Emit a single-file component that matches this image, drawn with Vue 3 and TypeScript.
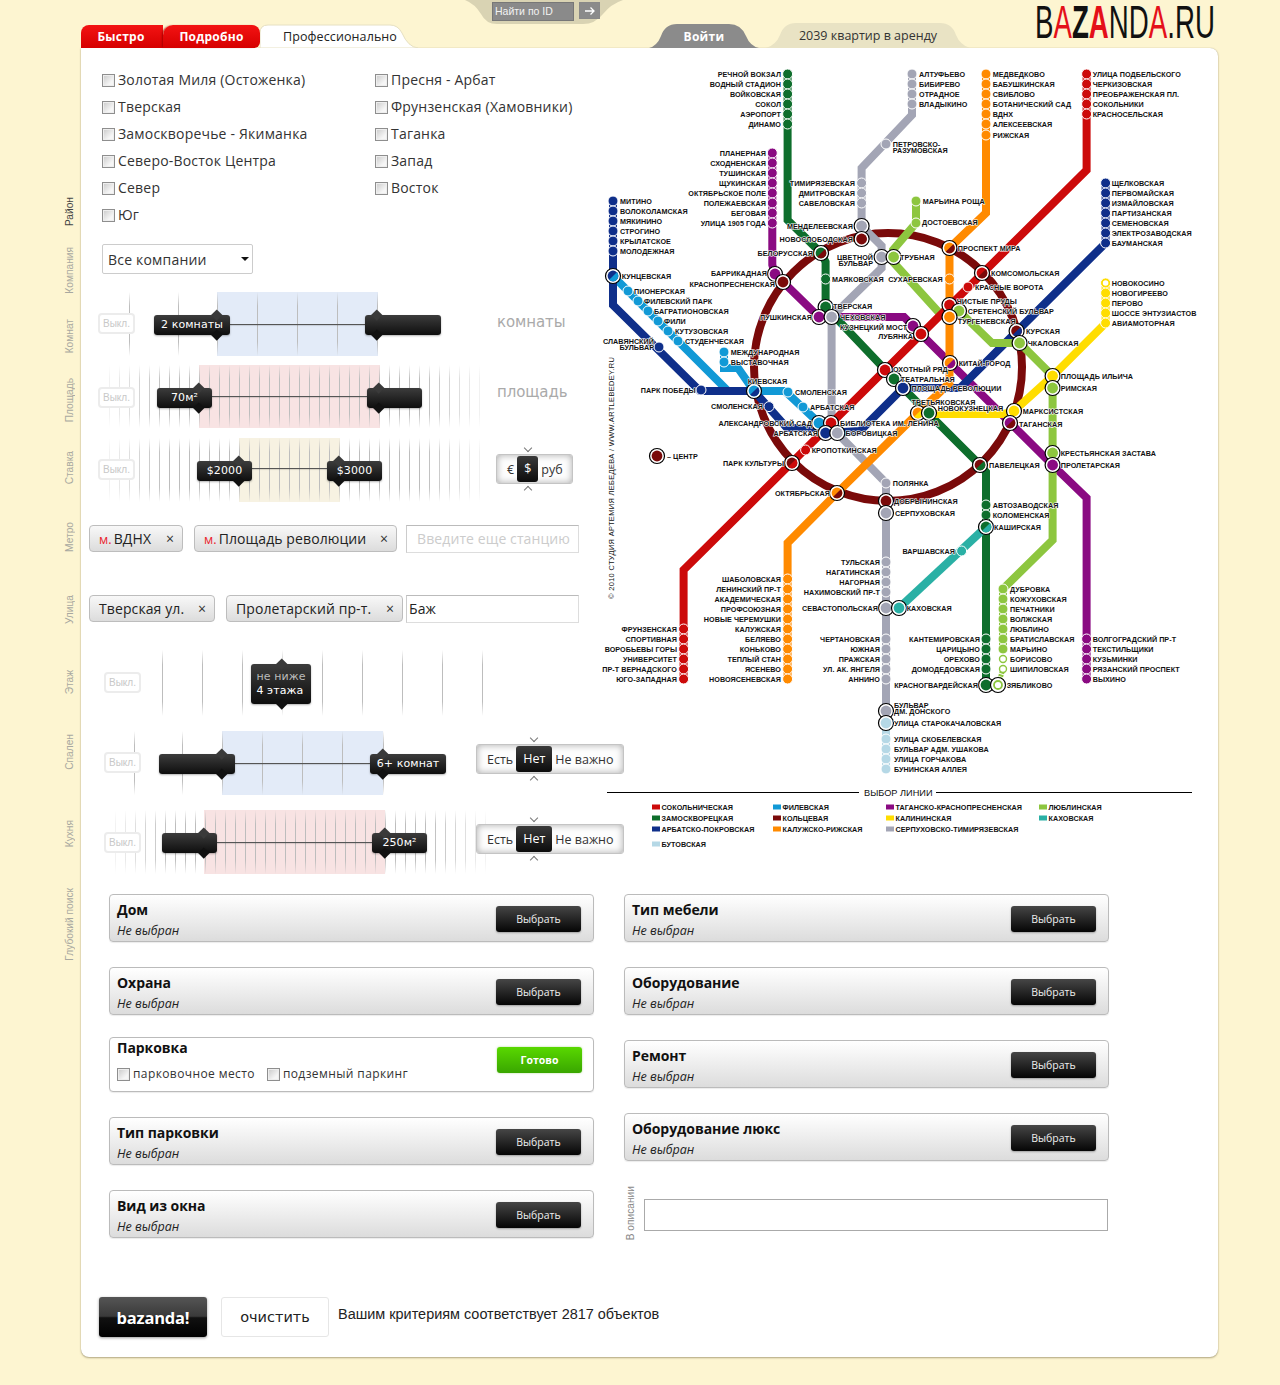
<script setup lang="ts">
interface Handle { x: number; w: number; d: number; text?: string; lines?: string[]; tall?: boolean }
interface Row {
  type: 'slider' | 'chips'
  mt: number
  h: number
  band?: { l: number; r: number; c: string }
  ticks?: { x: number; o: number }[]
  rail?: { l: number; r: number; y: number }
  off?: { x: number; y: number }
  handles?: Handle[]
  hy?: number
  label?: { t: string; ml: number; mt: number }
  seg?: { o: string[]; on: number; ml: number; mt: number }
  chips?: { m?: boolean; t: string; w: number; gap: number }[]
  input?: { ph?: string; v?: string }
}

const O = 89
const fine = (a: number, b: number) => {
  const out: { x: number; o: number }[] = []
  for (let x = a; x <= b; x += 10) {
    const e = Math.min(x - a, b - x)
    out.push({ x: x - O, o: Math.min(1, 0.2 + e / 70) })
  }
  return out
}
const some = (xs: number[], o = 1) => xs.map((x) => ({ x: x - O, o }))
const blue = '#e3ebf8'
const pink = '#f8e3e3'
const cream = '#f7f2e2'

const rows: Row[] = [
  { type: 'slider', mt: 18, h: 64, band: { l: 217, r: 378, c: blue }, ticks: some([129, 178, 217, 257, 297, 337, 377]), rail: { l: 230, r: 365, y: 32 }, off: { x: 98, y: 21 }, hy: 23,
    handles: [{ x: 154, w: 76, d: 217, text: '2 комнаты' }, { x: 365, w: 76, d: 377 }], label: { t: 'комнаты', ml: 21, mt: 20 } },
  { type: 'slider', mt: 9, h: 63, band: { l: 199, r: 380, c: pink }, ticks: fine(109, 480), rail: { l: 212, r: 367, y: 31 }, off: { x: 98, y: 22 }, hy: 23,
    handles: [{ x: 157, w: 55, d: 199, text: '70м²' }, { x: 367, w: 55, d: 379 }], label: { t: 'площадь', ml: 21, mt: 17 } },
  { type: 'slider', mt: 10, h: 64, band: { l: 239, r: 340, c: cream }, ticks: fine(109, 480), rail: { l: 252, r: 327, y: 30 }, off: { x: 98, y: 21 }, hy: 23,
    handles: [{ x: 197, w: 55, d: 239, text: '$2000' }, { x: 327, w: 55, d: 339, text: '$3000' }], seg: { o: ['€', '$', 'руб'], on: 1, ml: 20, mt: 16 } },
  { type: 'chips', mt: 23, h: 27, chips: [{ m: true, t: 'ВДНХ', w: 94, gap: 11 }, { m: true, t: 'Площадь революции', w: 203, gap: 9 }], input: { ph: 'Введите еще станцию' } },
  { type: 'chips', mt: 43, h: 27, chips: [{ t: 'Тверская ул.', w: 126, gap: 11 }, { t: 'Пролетарский пр-т.', w: 177, gap: 3 }], input: { v: 'Баж' } },
  { type: 'slider', mt: 28, h: 66, ticks: some([162, 202, 242, 282, 322, 362, 402, 442, 482]), off: { x: 104, y: 22 }, hy: 14,
    handles: [{ x: 251, w: 60, d: 282, lines: ['не ниже', '4 этажа'], tall: true }] },
  { type: 'slider', mt: 15, h: 64, band: { l: 222, r: 383, c: blue }, ticks: some([134, 182, 222, 262, 302, 342, 383]), rail: { l: 235, r: 370, y: 32 }, off: { x: 104, y: 21 }, hy: 23,
    handles: [{ x: 159, w: 76, d: 222 }, { x: 370, w: 76, d: 383, text: '6+ комнат' }], seg: { o: ['Есть', 'Нет', 'Не важно'], on: 1, ml: 0, mt: 13 } },
  { type: 'slider', mt: 15, h: 64, band: { l: 204, r: 385, c: pink }, ticks: fine(115, 485), rail: { l: 217, r: 372, y: 32 }, off: { x: 104, y: 22 }, hy: 23,
    handles: [{ x: 162, w: 55, d: 204 }, { x: 372, w: 55, d: 385, text: '250м²' }], seg: { o: ['Есть', 'Нет', 'Не важно'], on: 1, ml: 0, mt: 14 } },
]

const sideLabels = [
  { t: 'Район', h: 50, on: true }, { t: 'Компания', h: 72 }, { t: 'Комнат', h: 59 }, { t: 'Площадь', h: 73 },
  { t: 'Ставка', h: 71 }, { t: 'Метро', h: 73 }, { t: 'Улица', h: 75 }, { t: 'Этаж', h: 64 },
  { t: 'Спален', h: 86 }, { t: 'Кухня', h: 68 }, { t: 'Глубокий поиск', h: 80 },
]

const districts = [
  'Золотая Миля (Остоженка)', 'Пресня - Арбат', 'Тверская', 'Фрунзенская (Хамовники)',
  'Замоскворечье - Якиманка', 'Таганка', 'Северо-Восток Центра', 'Запад', 'Север', 'Восток', 'Юг',
]
const leftBlocks = ['Дом', 'Охрана', 'Парковка', 'Тип парковки', 'Вид из окна']
const rightBlocks = ['Тип мебели', 'Оборудование', 'Ремонт', 'Оборудование люкс']

/* metro map */
const C = { red: '#cc0a0a', grn: '#0e6e2c', blu: '#0f2f8a', lbl: '#1199d6', brn: '#7a0a0a', org: '#ff8a00', pur: '#8a0a82', yel: '#ffdd00', gry: '#a3a5b5', lim: '#8dc63f', tea: '#2ab0a5', but: '#b5d8e6' }
const lines: { c: string; p: string }[] = [
  { c: C.pur, p: '772.3,153 772.3,265 775,274 819,317 904,317 913,326 1052.6,465 1086.6,498 1086.6,679' },
  { c: C.gry, p: '912,74 912,115 861.6,168 861.6,226 881.6,246 881.6,268 831.6,317 831.6,425 837,433 886,483 886,711' },
  { c: C.but, p: '886,723 886,769' },
  { c: C.grn, p: '787.6,74 787.6,220 821,253 825.6,262 825.6,307 894,379 980,465 986,472 986,685' },
  { c: C.lbl, p: '613,276 728,391 785,391 819,423' },
  { c: C.lbl, p: '724,352 724,368 738,368 754,391' },
  { c: C.blu, p: '1105.6,183 1105.6,243 960,388 903,388 860,431 825.6,433' },
  { c: C.blu, p: '825.6,433 815,428 787,428 754,391 700,391 613,305 613,201' },
  { c: C.lim, p: '916,201 916,223 893,250 893,262 943,317' },
  { c: C.lim, p: '959,311 992,343 1019.6,343 1052.6,376 1052.6,540 1003,589 1003,649' },
  { c: C.yel, p: '1105.6,283 1105.6,323 1052.6,376 1014,411 1003,414 929,414' },
  { c: C.org, p: '986,74 986,213 949.5,248 949.5,383 918,413 837,493 787.6,543 787.6,679' },
  { c: C.red, p: '1086.6,74 1086.6,170 683.6,570 683.6,679' },
  { c: C.tea, p: '986,527 899,608' },
]
const col = (c: string, x: number, tx: number, a: string, items: [number, string][]) => ({ c, x, tx, a, items })
const seq = (s: number, n: string[]) => n.map((t, i) => [s + i * 10, t] as [number, string])
const cols = [
  col(C.grn, 787.6, 781, 'end', seq(74, ['РЕЧНОЙ ВОКЗАЛ', 'ВОДНЫЙ СТАДИОН', 'ВОЙКОВСКАЯ', 'СОКОЛ', 'АЭРОПОРТ', 'ДИНАМО'])),
  col(C.pur, 772.3, 766, 'end', seq(153, ['ПЛАНЕРНАЯ', 'СХОДНЕНСКАЯ', 'ТУШИНСКАЯ', 'ЩУКИНСКАЯ', 'ОКТЯБРЬСКОЕ ПОЛЕ', 'ПОЛЕЖАЕВСКАЯ', 'БЕГОВАЯ', 'УЛИЦА 1905 ГОДА'])),
  col(C.gry, 861.6, 855, 'end', seq(183, ['ТИМИРЯЗЕВСКАЯ', 'ДМИТРОВСКАЯ', 'САВЕЛОВСКАЯ'])),
  col(C.blu, 613, 620, 'start', seq(201, ['МИТИНО', 'ВОЛОКОЛАМСКАЯ', 'МЯКИНИНО', 'СТРОГИНО', 'КРЫЛАТСКОЕ', 'МОЛОДЕЖНАЯ'])),
  col(C.gry, 912, 919, 'start', seq(74, ['АЛТУФЬЕВО', 'БИБИРЕВО', 'ОТРАДНОЕ', 'ВЛАДЫКИНО'])),
  col(C.org, 986, 992.7, 'start', [...seq(74, ['МЕДВЕДКОВО', 'БАБУШКИНСКАЯ', 'СВИБЛОВО', 'БОТАНИЧЕСКИЙ САД', 'ВДНХ', 'АЛЕКСЕЕВСКАЯ']), [135, 'РИЖСКАЯ']]),
  col(C.red, 1086.6, 1092.7, 'start', seq(74, ['УЛИЦА ПОДБЕЛЬСКОГО', 'ЧЕРКИЗОВСКАЯ', 'ПРЕОБРАЖЕНСКАЯ ПЛ.', 'СОКОЛЬНИКИ', 'КРАСНОСЕЛЬСКАЯ'])),
  col(C.blu, 1105.6, 1111.7, 'start', seq(183, ['ЩЕЛКОВСКАЯ', 'ПЕРВОМАЙСКАЯ', 'ИЗМАЙЛОВСКАЯ', 'ПАРТИЗАНСКАЯ', 'СЕМЕНОВСКАЯ', 'ЭЛЕКТРОЗАВОДСКАЯ', 'БАУМАНСКАЯ'])),
  col(C.yel, 1105.6, 1111.7, 'start', seq(283, ['НОВОКОСИНО', 'НОВОГИРЕЕВО', 'ПЕРОВО', 'ШОССЕ ЭНТУЗИАСТОВ', 'АВИАМОТОРНАЯ'])),
  col(C.red, 683.6, 677, 'end', seq(629, ['ФРУНЗЕНСКАЯ', 'СПОРТИВНАЯ', 'ВОРОБЬЕВЫ ГОРЫ', 'УНИВЕРСИТЕТ', 'ПР-Т ВЕРНАДСКОГО', 'ЮГО-ЗАПАДНАЯ'])),
  col(C.org, 787.6, 781, 'end', seq(579, ['ШАБОЛОВСКАЯ', 'ЛЕНИНСКИЙ ПР-Т', 'АКАДЕМИЧЕСКАЯ', 'ПРОФСОЮЗНАЯ', 'НОВЫЕ ЧЕРЕМУШКИ', 'КАЛУЖСКАЯ', 'БЕЛЯЕВО', 'КОНЬКОВО', 'ТЕПЛЫЙ СТАН', 'ЯСЕНЕВО', 'НОВОЯСЕНЕВСКАЯ'])),
  col(C.gry, 886, 880, 'end', seq(562, ['ТУЛЬСКАЯ', 'НАГАТИНСКАЯ', 'НАГОРНАЯ', 'НАХИМОВСКИЙ ПР-Т'])),
  col(C.gry, 886, 880, 'end', seq(639, ['ЧЕРТАНОВСКАЯ', 'ЮЖНАЯ', 'ПРАЖСКАЯ', 'УЛ. АК. ЯНГЕЛЯ', 'АННИНО'])),
  col(C.but, 886, 894, 'start', seq(739, ['УЛИЦА СКОБЕЛЕВСКАЯ', 'БУЛЬВАР АДМ. УШАКОВА', 'УЛИЦА ГОРЧАКОВА', 'БУНИНСКАЯ АЛЛЕЯ'])),
  col(C.grn, 986, 980, 'end', seq(639, ['КАНТЕМИРОВСКАЯ', 'ЦАРИЦЫНО', 'ОРЕХОВО', 'ДОМОДЕДОВСКАЯ'])),
  col(C.grn, 986, 992.7, 'start', seq(505, ['АВТОЗАВОДСКАЯ', 'КОЛОМЕНСКАЯ'])),
  col(C.lim, 1003, 1010, 'start', seq(589, ['ДУБРОВКА', 'КОЖУХОВСКАЯ', 'ПЕЧАТНИКИ', 'ВОЛЖСКАЯ', 'ЛЮБЛИНО', 'БРАТИСЛАВСКАЯ', 'МАРЬИНО'])),
  col(C.pur, 1086.6, 1092.7, 'start', seq(639, ['ВОЛГОГРАДСКИЙ ПР-Т', 'ТЕКСТИЛЬЩИКИ', 'КУЗЬМИНКИ', 'РЯЗАНСКИЙ ПРОСПЕКТ', 'ВЫХИНО'])),
]
const plain: [number, number, string][] = [
  [628, 291, C.lbl], [638, 301, C.lbl], [648, 311, C.lbl], [658, 321, C.lbl], [668, 331, C.lbl], [678, 341, C.lbl],
  [724, 352, C.lbl], [724, 362, C.lbl], [788, 392, C.lbl], [803, 407, C.lbl], [659, 347, C.blu], [701, 390, C.blu], [769, 406.6, C.blu],
  [825.6, 279, C.grn], [886, 144, C.gry], [886, 483, C.gry], [916, 201, C.lim], [916, 223, C.lim], [949.5, 279, C.org], [968, 287, C.red],
  [805.6, 450, C.red], [961.6, 551, C.tea],
]
const hollow: [number, number][] = [[1003, 659], [1003, 669], [1105.6, 283]]
const hubs: [number, number, string, string?][] = [
  [613, 276, C.blu, C.lbl], [754, 391, C.lbl, C.blu], [821, 253, C.grn, C.brn], [861.6, 226, C.gry], [861.6, 239, C.brn],
  [881.6, 257, C.gry], [893.6, 257, C.lim], [775, 274, C.pur], [783, 282, C.brn], [825.6, 307, C.grn], [819, 317, C.pur], [831.6, 317, C.gry],
  [913, 326, C.pur], [921, 334, C.red], [949.5, 248, C.org, C.brn], [982, 273, C.red, C.brn], [949.5, 305, C.red], [959, 311, C.lim], [949.5, 317, C.org],
  [1016.6, 331, C.brn, C.blu], [1019.6, 343, C.lim], [950, 363, C.org, C.pur], [885, 370, C.red], [894, 379, C.grn], [903, 388, C.blu],
  [918, 413, C.org, C.yel], [929, 413, C.grn], [1052.6, 376, C.yel], [1052.6, 388, C.lim], [1014, 411, C.yel], [1010, 423, C.pur, C.brn],
  [1052.6, 453, C.lim], [1052.6, 465, C.pur], [980, 465, C.brn, C.grn], [886, 501, C.brn], [886, 513, C.gry], [837, 493, C.org, C.brn], [792, 463, C.brn, C.red],
  [819, 423, C.lbl], [831, 423, C.red], [825.6, 433, C.blu], [837.3, 433, C.gry], [986, 527, C.grn, C.tea], [886, 608, C.gry], [899, 608, C.tea],
  [986, 685, C.grn], [886, 711, C.gry], [886, 723, C.but], [657, 456, C.brn],
]
const half = (x: number, y: number) => {
  const r = 5.4, k = r * 0.707
  return `M${x - k} ${y + k} A${r} ${r} 0 0 0 ${x + k} ${y - k} Z`
}
const tags: [string, number, number, string][] = [
  ['МЕНДЕЛЕЕВСКАЯ', 853, 226, 'end'], ['НОВОСЛОБОДСКАЯ', 853, 239, 'end'], ['БЕЛОРУССКАЯ', 813, 253, 'end'], ['ЦВЕТНОЙ|БУЛЬВАР', 873, 257, 'end'],
  ['МАЯКОВСКАЯ', 832, 279, 'start'], ['ТВЕРСКАЯ', 833, 306, 'start'], ['БАРРИКАДНАЯ', 767, 273, 'end'], ['КРАСНОПРЕСНЕНСКАЯ', 775, 284, 'end'],
  ['ПУШКИНСКАЯ', 812, 317, 'end'], ['ЧЕХОВСКАЯ', 840, 317, 'start'], ['КУЗНЕЦКИЙ МОСТ', 840, 327, 'start'], ['ЛУБЯНКА', 913, 336, 'end'],
  ['ОХОТНЫЙ РЯД', 893, 369, 'start'], ['ТЕАТРАЛЬНАЯ', 900.7, 379, 'start'], ['ПЛОЩАДЬ РЕВОЛЮЦИИ', 911.6, 388, 'start'], ['ТРЕТЬЯКОВСКАЯ', 911.6, 402, 'start'], ['НОВОКУЗНЕЦКАЯ', 937.7, 408, 'start'],
  ['БИБЛИОТЕКА ИМ. ЛЕНИНА', 840, 423, 'start'], ['БОРОВИЦКАЯ', 845.6, 433, 'start'], ['АРБАТСКАЯ', 818, 433, 'end'], ['АЛЕКСАНДРОВСКИЙ САД', 812, 423, 'end'],
  ['АРБАТСКАЯ', 810, 407, 'start'], ['СМОЛЕНСКАЯ', 795, 392, 'start'], ['СМОЛЕНСКАЯ', 763, 406, 'end'], ['КИЕВСКАЯ', 747.7, 381, 'start'], ['ПАРК ПОБЕДЫ', 695.7, 390, 'end'],
  ['СЛАВЯНСКИЙ|БУЛЬВАР', 654, 341, 'end'], ['МЕЖДУНАРОДНАЯ', 730.7, 352, 'start'], ['ВЫСТАВОЧНАЯ', 730.7, 362, 'start'],
  ['СТУДЕНЧЕСКАЯ', 685, 341, 'start'], ['КУТУЗОВСКАЯ', 675, 331, 'start'], ['ФИЛИ', 664, 321, 'start'], ['БАГРАТИОНОВСКАЯ', 654, 311, 'start'], ['ФИЛЕВСКИЙ ПАРК', 644, 301, 'start'], ['ПИОНЕРСКАЯ', 634, 291, 'start'],
  ['КУНЦЕВСКАЯ', 621.7, 276, 'start'], ['КРОПОТКИНСКАЯ', 811.7, 450, 'start'], ['ПАРК КУЛЬТУРЫ', 784, 463, 'end'], ['ОКТЯБРЬСКАЯ', 830, 493, 'end'],
  ['МАРЬИНА РОЩА', 922.7, 201, 'start'], ['ДОСТОЕВСКАЯ', 922, 222, 'start'], ['ПРОСПЕКТ МИРА', 957.7, 248, 'start'], ['КОМСОМОЛЬСКАЯ', 991, 273, 'start'], ['КРАСНЫЕ ВОРОТА', 975, 287, 'start'],
  ['ЧИСТЫЕ ПРУДЫ', 956.7, 301, 'start'], ['СРЕТЕНСКИЙ БУЛЬВАР', 967.7, 311, 'start'], ['ТУРГЕНЕВСКАЯ', 957.7, 321, 'start'], ['ТРУБНАЯ', 900, 257, 'start'], ['СУХАРЕВСКАЯ', 942.7, 279, 'end'],
  ['КУРСКАЯ', 1026, 331, 'start'], ['ЧКАЛОВСКАЯ', 1027.7, 343, 'start'], ['ПЕТРОВСКО-|РАЗУМОВСКАЯ', 892.7, 144, 'start'], ['КИТАЙ-ГОРОД', 958.7, 363, 'start'],
  ['ПЛОЩАДЬ ИЛЬИЧА', 1060.7, 376, 'start'], ['РИМСКАЯ', 1060.7, 388, 'start'], ['МАРКСИСТСКАЯ', 1022.7, 411, 'start'], ['ТАГАНСКАЯ', 1019, 424, 'start'], ['КРЕСТЬЯНСКАЯ ЗАСТАВА', 1060.7, 453, 'start'], ['ПРОЛЕТАРСКАЯ', 1060.7, 465, 'start'],
  ['ПАВЕЛЕЦКАЯ', 989, 465, 'start'], ['ПОЛЯНКА', 892.7, 483, 'start'], ['ДОБРЫНИНСКАЯ', 894, 501, 'start'], ['СЕРПУХОВСКАЯ', 895, 513, 'start'], ['КАШИРСКАЯ', 994, 527, 'start'], ['ВАРШАВСКАЯ', 955, 551, 'end'],
  ['КАХОВСКАЯ', 906.7, 608, 'start'], ['СЕВАСТОПОЛЬСКАЯ', 878, 608, 'end'], ['КРАСНОГВАРДЕЙСКАЯ', 978, 685, 'end'], ['ЗЯБЛИКОВО', 1006.7, 685, 'start'], ['БОРИСОВО', 1010, 659, 'start'], ['ШИПИЛОВСКАЯ', 1010, 669, 'start'],
  ['БУЛЬВАР|ДМ. ДОНСКОГО', 894, 705, 'start'], ['УЛИЦА СТАРОКАЧАЛОВСКАЯ', 894, 723, 'start'], ['– ЦЕНТР', 667, 456, 'start'],
]
const legend: [string, string, number, number][] = [
  [C.red, 'СОКОЛЬНИЧЕСКАЯ', 652, 807], [C.grn, 'ЗАМОСКВОРЕЦКАЯ', 652, 818], [C.blu, 'АРБАТСКО-ПОКРОВСКАЯ', 652, 829], [C.but, 'БУТОВСКАЯ', 652, 844],
  [C.lbl, 'ФИЛЕВСКАЯ', 773, 807], [C.brn, 'КОЛЬЦЕВАЯ', 773, 818], [C.org, 'КАЛУЖСКО-РИЖСКАЯ', 773, 829],
  [C.pur, 'ТАГАНСКО-КРАСНОПРЕСНЕНСКАЯ', 886, 807], [C.yel, 'КАЛИНИНСКАЯ', 886, 818], [C.gry, 'СЕРПУХОВСКО-ТИМИРЯЗЕВСКАЯ', 886, 829],
  [C.lim, 'ЛЮБЛИНСКАЯ', 1039, 807], [C.tea, 'КАХОВСКАЯ', 1039, 818],
]
</script>

<template>
  <div class="page">
    <header class="head">
      <div class="finder">
        <svg class="finder-bg" width="160" height="24" viewBox="0 0 160 24"><path d="M0 0 Q10 4 16 14 Q21 24 32 24 H118 Q130 24 138 14 Q146 4 158 0 Z" fill="#d9d3b3" /></svg>
        <span class="finder-in">Найти по ID</span>
        <span class="finder-go">
          <svg width="12" height="10" viewBox="0 0 12 10"><path d="M1 5H10M6.5 1.5 10 5 6.5 8.500" fill="none" stroke="#fff" stroke-width="1.300" /></svg>
        </span>
      </div>
      <div class="tab red first">Быстро</div>
      <div class="tab red second">Подробно</div>
      <div class="tab pro">
        <svg class="tab-bg" width="158" height="24" viewBox="0 0 158 24"><path d="M0 24V9Q0 1 8 1H130Q138 1 142 9Q148 23 158 24Z" fill="#fff" stroke="#e6e0c2" /></svg>
        <span>Профессионально</span>
      </div>
      <div class="grow"></div>
      <div class="tab login">
        <svg class="tab-bg" width="110" height="24" viewBox="0 0 110 24"><path d="M0 24Q8 22 12 12Q16 0 28 0H80Q92 0 97 12Q101 22 110 24Z" fill="#8b8b8b" /></svg>
        <span>Войти</span>
      </div>
      <div class="tab rent">
        <svg class="tab-bg" width="204" height="25" viewBox="0 0 204 25"><path d="M0 25Q10 22 14 12Q18 0 30 0H174Q186 0 190 12Q194 22 204 25Z" fill="#e9e3c4" /></svg>
        <span>2039 квартир в аренду</span>
      </div>
      <svg class="logo" width="180" height="48" viewBox="0 0 180 48">
        <text class="logo-t" x="0" y="38" textLength="180" lengthAdjust="spacingAndGlyphs">B<tspan class="r">A</tspan><tspan class="bold">Z</tspan><tspan class="r bold">A</tspan>ND<tspan class="r">A</tspan>.RU</text>
      </svg>
    </header>

    <div class="body">
      <aside class="side">
        <div v-for="l in sideLabels" :key="l.t" class="vwrap" :style="{ height: l.h + 'px' }">
          <span class="vlabel" :class="{ on: l.on }">{{ l.t }}</span>
        </div>
      </aside>

      <main class="panel">
        <div class="top">
          <div class="left">
            <div class="districts">
              <label v-for="d in districts" :key="d" class="check"><i class="cb"></i>{{ d }}</label>
            </div>
            <div class="select"><span>Все компании</span><i class="caret"></i></div>

            <template v-for="(r, i) in rows" :key="i">
              <div v-if="r.type === 'slider'" class="row" :style="{ marginTop: r.mt + 'px', height: r.h + 'px' }">
                <div class="track">
                  <div v-if="r.band" class="band" :style="{ left: r.band.l - O + 'px', width: r.band.r - r.band.l + 'px', background: r.band.c }"></div>
                  <i v-for="t in r.ticks" :key="t.x" class="tick" :style="{ left: t.x + 'px', opacity: t.o }"></i>
                  <div v-if="r.rail" class="rail" :style="{ left: r.rail.l - O + 'px', width: r.rail.r - r.rail.l + 'px', top: r.rail.y + 'px' }"></div>
                  <div class="off" :style="{ left: r.off!.x - O + 'px', top: r.off!.y + 'px' }">Выкл.</div>
                  <div v-for="h in r.handles" :key="h.x" class="handle" :class="{ tall: h.tall }" :style="{ left: h.x - O + 'px', width: h.w + 'px', top: r.hy + 'px' }">
                    <i class="dia up" :style="{ left: h.d - h.x - 3.75 + 'px' }"></i>
                    <i class="dia down" :style="{ left: h.d - h.x - 3.75 + 'px' }"></i>
                    <span v-if="h.text" class="htext">{{ h.text }}</span>
                    <span v-if="h.lines" class="htext two"><em>{{ h.lines[0] }}</em>{{ h.lines[1] }}</span>
                  </div>
                </div>
                <div v-if="r.label" class="rlabel" :style="{ marginLeft: r.label.ml + 'px', marginTop: r.label.mt + 'px' }">{{ r.label.t }}</div>
                <div v-if="r.seg" class="seg" :style="{ marginLeft: r.seg.ml + 'px', marginTop: r.seg.mt + 'px' }">
                  <span v-for="(o, k) in r.seg.o" :key="o" class="opt" :class="{ on: k === r.seg.on }">{{ o }}</span>
                </div>
              </div>
              <div v-else class="chiprow" :style="{ marginTop: r.mt + 'px' }">
                <span v-for="c in r.chips" :key="c.t" class="chip" :style="{ width: c.w + 'px', marginRight: c.gap + 'px' }">
                  <span><b v-if="c.m" class="mm">м.</b>{{ c.t }}</span><i class="x">×</i>
                </span>
                <input class="tin" :class="{ pad: r.input?.ph }" type="text" :placeholder="r.input?.ph" :value="r.input?.v" />
              </div>
            </template>
          </div>

          <svg class="map" width="600" height="800" viewBox="600 60 600 800">
            <circle cx="888" cy="367" r="134" fill="none" :stroke="C.brn" stroke-width="8" />
            <polyline v-for="(l, i) in lines" :key="i" :points="l.p" fill="none" :stroke="l.c" stroke-width="8" stroke-linejoin="miter" />
            <path d="M998 685 L1003 669" stroke="#8dc63f" stroke-width="5" fill="none" stroke-dasharray="2 1" />
            <template v-for="(g, gi) in cols" :key="gi">
              <circle v-for="it in g.items" :key="it[0]" :cx="g.x" :cy="it[0]" r="5" :fill="g.c" stroke="#fff" stroke-width="1" />
              <text v-for="it in g.items" :key="it[1]" class="mt" :x="g.tx" :y="it[0] + 2.600" :text-anchor="g.a">{{ it[1] }}</text>
            </template>
            <circle v-for="(s, i) in plain" :key="i" :cx="s[0]" :cy="s[1]" r="5" :fill="s[2]" stroke="#fff" stroke-width="1" />
            <circle v-for="(s, i) in hollow" :key="'h' + i" :cx="s[0]" :cy="s[1]" r="3.500" fill="#fff" :stroke="s[0] > 1100 ? C.yel : C.lim" stroke-width="1.400" />
            <template v-for="(h, i) in hubs" :key="'c' + i">
              <circle :cx="h[0]" :cy="h[1]" r="7.500" fill="#fff" stroke="#000" stroke-width="1.200" />
              <circle :cx="h[0]" :cy="h[1]" r="5.400" :fill="h[2]" />
              <path v-if="h[3]" :d="half(h[0], h[1])" :fill="h[3]" />
            </template>
            <circle cx="998" cy="685" r="7.500" fill="#fff" stroke="#000" stroke-width="1.200" />
            <circle cx="998" cy="685" r="4" fill="#fff" stroke="#8dc63f" stroke-width="1.800" />
            <text v-for="(t, i) in tags" :key="'t' + i" class="mt" :y="t[2] + 2.600" :text-anchor="t[3]">
              <tspan v-for="(part, k) in t[0].split('|')" :key="part" :x="t[1]" :dy="k ? 6 : 0">{{ part }}</tspan>
            </text>
            <text class="mt copy" transform="rotate(-90 614 599)" x="614" y="599">© 2010 СТУДИЯ АРТЕМИЯ ЛЕБЕДЕВА  /  WWW.ARTLEBEDEY.RU</text>
            <line x1="607" y1="792.500" x2="859" y2="792.500" stroke="#000" />
            <line x1="936" y1="792.500" x2="1192" y2="792.500" stroke="#000" />
            <text class="ltitle" x="864" y="796">ВЫБОР ЛИНИИ</text>
            <template v-for="(l, i) in legend" :key="'l' + i">
              <rect :x="l[2]" :y="l[3] - 2.500" width="8" height="5" :fill="l[0]" />
              <text class="mt" :x="l[2] + 9.500" :y="l[3] + 2.600">{{ l[1] }}</text>
            </template>
          </svg>
        </div>

        <div class="blocks">
          <div class="bcol">
            <template v-for="b in leftBlocks" :key="b">
              <div v-if="b === 'Парковка'" class="block parking">
                <div class="binfo">
                  <div class="btitle">{{ b }}</div>
                  <div class="pchecks">
                    <label class="pcheck"><i class="cb"></i>парковочное место</label>
                    <label class="pcheck"><i class="cb"></i>подземный паркинг</label>
                  </div>
                </div>
                <button class="btn green">Готово</button>
              </div>
              <div v-else class="block">
                <div class="binfo">
                  <div class="btitle">{{ b }}</div>
                  <div class="bsub">Не выбран</div>
                </div>
                <button class="btn">Выбрать</button>
              </div>
            </template>
          </div>
          <div class="bcol">
            <div v-for="b in rightBlocks" :key="b" class="block">
              <div class="binfo">
                <div class="btitle">{{ b }}</div>
                <div class="bsub">Не выбран</div>
              </div>
              <button class="btn">Выбрать</button>
            </div>
            <div class="descr">
              <span class="dlabel">В описании</span>
              <input class="dinput" type="text" />
            </div>
          </div>
        </div>

        <div class="foot">
          <button class="go">bazanda!</button>
          <button class="clear">очистить</button>
          <span class="count">Вашим критериям соответствует 2817 объектов</span>
        </div>
      </main>
    </div>
  </div>
</template>

<style>
html, body { margin: 0; background: #fdf5d1; }
</style>

<style scoped>
.page { width: 1280px; height: 1385px; background: #fdf5d1; font-family: "Open Sans", "DejaVu Sans", sans-serif; color: #222; overflow: hidden; position: relative; }
.head { height: 48px; display: flex; align-items: flex-end; padding-left: 81px; position: relative; z-index: 2; }
.finder { position: absolute; left: 465px; top: 0; width: 160px; height: 24px; }
.finder-bg { position: absolute; left: 0; top: 0; }
.finder-in { position: absolute; left: 27px; top: 2px; width: 82px; height: 19px; box-sizing: border-box; background: #8a8a8a; border: 1px solid #777; color: #f2f2f2; font: 10.500px/17px "Liberation Sans", sans-serif; padding-left: 2px; }
.finder-go { position: absolute; left: 114px; top: 2px; width: 21px; height: 17px; background: #8a8a8a; border: 1px solid #888; box-sizing: border-box; display: flex; align-items: center; justify-content: center; }
.tab { height: 23px; display: flex; align-items: center; justify-content: center; position: relative; font-size: 13px; box-sizing: border-box; }
.tab-bg { position: absolute; left: 0; bottom: 0; }
.tab span { position: relative; }
.red { background: linear-gradient(#f31313, #d60000); color: #fff; font-weight: 700; font-size: 12px; letter-spacing: .25px; }
.first { width: 82px; border-radius: 8px 0 0 0; padding-right: 2px; }
.second { width: 97px; border-radius: 10px 8px 6px 0; box-shadow: -2px 0 2px -1px #a80000; }
.pro { width: 158px; height: 24px; justify-content: flex-start; letter-spacing: .1px; font-size: 12.500px; }
.pro span { margin-left: 23px; color: #222; }
.grow { flex: 1; }
.login { width: 110px; height: 24px; color: #fff; font-weight: 700; font-size: 12px; letter-spacing: .3px; }
.rent { width: 204px; height: 25px; margin-left: 7px; font-size: 12.500px; color: #333; }
.logo { margin: 0 65px; flex: none; display: block; }
.logo-t { font: 400 46px "Liberation Sans", sans-serif; fill: #111; }
.logo-t .bold { font-weight: 700; }
.logo-t .r { fill: #e4101a; }
.body { display: flex; }
.side { width: 81px; padding-top: 149px; box-sizing: border-box; display: flex; flex-direction: column; align-items: flex-end; padding-right: 5px; flex: none; }
.vwrap { width: 13px; }
.vlabel { display: block; writing-mode: vertical-rl; transform: rotate(180deg); font: 10.200px/13px "Liberation Sans", sans-serif; color: #a8a8a0; white-space: nowrap; }
.vlabel.on { color: #444; }
.panel { width: 1137px; height: 1309px; background: #fff; border-radius: 0 8px 8px 8px; box-shadow: 0 1px 2px rgba(120, 110, 70, .55), 0 0 1px rgba(120, 110, 70, .5); flex: none; }
.top { display: flex; }
.left { width: 519px; flex: none; padding-left: 8px; box-sizing: border-box; position: relative; z-index: 1; }
.districts { display: grid; grid-template-columns: 273px 1fr; padding: 18px 0 0 13px; height: 178px; box-sizing: content-box; grid-auto-rows: 27px; }
.check { display: flex; align-items: center; font-size: 14px; letter-spacing: .2px; color: #333; height: 27px; white-space: nowrap; }
.cb { width: 13px; height: 13px; box-sizing: border-box; border: 1px solid #8e8e8e; background: linear-gradient(135deg, #c9c9c9, #f6f6f6 70%); margin: 2px 3px 0 0; flex: none; display: inline-block; outline: 1px solid #eee; outline-offset: -2px; }
.select { width: 151px; height: 30px; margin: 0 0 0 13px; box-sizing: border-box; border: 1px solid #ccc; border-radius: 2px; display: flex; align-items: center; justify-content: space-between; padding: 0 3px 0 5px; font-size: 14px; letter-spacing: .2px; color: #333; }
.caret { width: 0; height: 0; border: 4px solid transparent; border-top-color: #111; border-bottom: 0; }
.row { display: flex; align-items: flex-start; }
.track { position: relative; width: 387px; height: 100%; flex: none; }
.band { position: absolute; top: 0; bottom: 0; }
.tick { position: absolute; top: 0; bottom: 0; width: 1px; background: linear-gradient(transparent, #bdbdbd 22%, #bdbdbd 78%, transparent); }
.rail { position: absolute; height: 1px; background: #555; box-shadow: 0 1px 1px rgba(0, 0, 0, .15); }
.off { position: absolute; width: 37px; height: 21px; box-sizing: border-box; background: #fff; border: 2px solid #ececec; border-radius: 4px; color: #c8c8c8; font: 10px/17px "Liberation Sans", sans-serif; text-align: center; }
.handle { position: absolute; height: 20px; background: linear-gradient(#3c3c3c, #0e0e0e); border-radius: 3px; box-shadow: 0 1px 2px rgba(0, 0, 0, .3); color: #fff; display: flex; align-items: center; justify-content: center; z-index: 1; isolation: isolate; }
.handle.tall { height: 40px; }
.dia { position: absolute; width: 7.500px; height: 7.500px; background: #3a3a3a; transform: rotate(45deg); z-index: -1; }
.dia.up { top: -3.750px; }
.dia.down { bottom: -3.750px; background: #111; }
.htext { position: relative; font: 11px/20px "DejaVu Sans", sans-serif; letter-spacing: .1px; white-space: nowrap; }
.htext.two { line-height: 14px; text-align: left; }
.htext em { display: block; font-style: normal; color: #bbb; }
.rlabel { font: 15px/20px "DejaVu Sans", sans-serif; color: #aaa; letter-spacing: -.1px; }
.seg { display: flex; align-items: center; height: 30px; box-sizing: border-box; padding: 0 9px 0 10px; border: 1px solid #c4c4c4; border-radius: 3px; background: #fdfdfd; box-shadow: inset 0 0 7px #aaa; font-size: 12.500px; gap: 3px; color: #333; position: relative; }
.opt { position: relative; white-space: nowrap; }
.opt.on { background: linear-gradient(#3a3a3a, #0c0c0c); color: #fff; height: 26px; line-height: 26px; padding: 0 7px; border-radius: 3px; }
.opt.on::before, .opt.on::after { content: ""; position: absolute; left: 50%; width: 5px; height: 5px; margin-left: -3px; transform: rotate(45deg); }
.opt.on::before { top: -11px; border-right: 1px solid #777; border-bottom: 1px solid #777; }
.opt.on::after { bottom: -11px; border-left: 1px solid #777; border-top: 1px solid #777; }
.chiprow { display: flex; height: 27px; align-items: center; }
.chip { height: 27px; box-sizing: border-box; flex: none; border: 1px solid #bdbdbd; border-radius: 4px; background: linear-gradient(#f8f8f8, #dcdcdc); display: flex; align-items: center; justify-content: space-between; padding: 0 8px 0 9px; font-size: 14px; letter-spacing: .1px; color: #222; white-space: nowrap; }
.mm { color: #ea1c2c; font-weight: 400; font-size: 12.500px; margin-right: 2px; }
.x { font-style: normal; font-size: 14px; color: #333; }
.tin { width: 173px; height: 28px; box-sizing: border-box; border: 1px solid #ddd; border-top-color: #bbb; border-left-color: #ccc; padding: 0 0 0 2px; font: 14px "Open Sans", sans-serif; letter-spacing: .1px; color: #222; outline: none; flex: none; margin: 0; }
.tin.pad { padding-left: 10px; }
.tin::placeholder { color: #ccc; opacity: 1; }
.map { flex: none; overflow: visible; margin-top: 12px; display: block; }
.mt { font: 700 7.200px "Liberation Sans", sans-serif; fill: #111; stroke: #fff; stroke-width: 1.200px; paint-order: stroke; letter-spacing: .05px; }
.copy { stroke: none; letter-spacing: .3px; font-weight: 400; font-size: 7.500px; }
.ltitle { font: 9.200px "Liberation Sans", sans-serif; fill: #111; }
.blocks { display: flex; gap: 30px; padding-left: 28px; margin-top: 20px; }
.bcol { width: 485px; display: flex; flex-direction: column; gap: 25px; }
.block { height: 48px; box-sizing: border-box; border: 1px solid #bbb; border-radius: 4px; background: linear-gradient(#fff, #dcdcdc); display: flex; align-items: center; justify-content: space-between; padding: 0 12px 0 7px; box-shadow: 0 1px 1px rgba(0, 0, 0, .08); flex: none; }
.binfo { display: flex; flex-direction: column; margin-top: 4px; }
.btitle { font-weight: 700; font-size: 14px; line-height: 20px; letter-spacing: -.05px; color: #111; }
.bsub { font-style: italic; font-size: 12.500px; line-height: 20px; color: #222; margin-top: 1px; }
.block > .btn { margin-top: 2px; }
.parking { height: 55px; margin-top: -3px; background: #fff; padding-right: 11px; align-items: flex-start; }
.parking .binfo { margin-top: 0; }
.parking > .btn { margin-top: 9px; }
.pchecks { display: flex; gap: 12px; margin-top: 7px; }
.pcheck { display: flex; align-items: center; font-size: 12px; letter-spacing: .4px; color: #333; white-space: nowrap; }
.btn { width: 85px; height: 26px; flex: none; border: 0; border-radius: 3px; background: linear-gradient(#464646, #050505); color: #eee; font: 10.500px "Open Sans", sans-serif; box-shadow: 0 1px 2px rgba(0, 0, 0, .3); padding: 0; }
.btn.green { background: linear-gradient(#59d800, #39a600); color: #fff; font-weight: 700; box-shadow: 0 0 2px rgba(80, 180, 0, .5); }
.descr { display: flex; align-items: flex-start; height: 55px; }
.dlabel { writing-mode: vertical-rl; transform: rotate(180deg); font: 10px/12px "Liberation Sans", sans-serif; color: #888; width: 12px; margin-left: 1px; white-space: nowrap; letter-spacing: .1px; }
.dinput { width: 464px; height: 32px; box-sizing: border-box; border: 1px solid #aaa; margin: 13px 0 0 7px; outline: none; flex: none; }
.foot { display: flex; align-items: flex-start; padding-left: 18px; margin-top: 56px; }
.go { width: 108px; height: 40px; border: 0; border-radius: 3px; background: linear-gradient(#555 0, #3a3a3a 48%, #111 52%, #000 100%); color: #fff; font: 700 16.500px "Open Sans", sans-serif; box-shadow: 0 1px 3px rgba(0, 0, 0, .4); padding: 0; letter-spacing: -.2px; }
.clear { width: 108px; height: 40px; margin-left: 14px; background: #fff; border: 1px solid #e6e6e6; border-radius: 3px; color: #222; font: 14.500px "DejaVu Sans", sans-serif; padding: 0; }
.count { margin: 9px 0 0 9px; font: 14.450px/17px "Liberation Sans", sans-serif; color: #222; white-space: nowrap; }
</style>
